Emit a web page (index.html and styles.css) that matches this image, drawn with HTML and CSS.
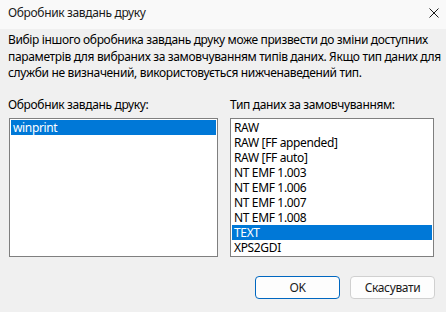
FILE: index.html
```html
<!DOCTYPE html>
<html lang="uk">
<head>
<meta charset="utf-8">
<title>Обробник завдань друку</title>
<link rel="stylesheet" href="styles.css">
</head>
<body>
<div class="window">
  <div class="titlebar">
    <span class="title">Обробник завдань друку</span>
    <svg class="close" width="10" height="10" viewBox="0 0 10 10"><path d="M0.5 0.5 L9.5 9.5 M9.5 0.5 L0.5 9.5" stroke="#1a1a1a" stroke-width="1" fill="none"/></svg>
  </div>
  <div class="content">
    <p class="intro">Вибір іншого обробника завдань друку може призвести до зміни доступних<br>параметрів для вибраних за замовчуванням типів даних. Якщо тип даних для<br>служби не визначений, використовується нижченаведений тип.</p>
    <div class="columns">
      <div class="col col-left">
        <div class="label">Обробник завдань друку:</div>
        <ul class="listbox list-left">
          <li class="sel">winprint</li>
        </ul>
      </div>
      <div class="col col-right">
        <div class="label">Тип даних за замовчуванням:</div>
        <ul class="listbox list-right">
          <li>RAW</li>
          <li>RAW [FF appended]</li>
          <li>RAW [FF auto]</li>
          <li>NT EMF 1.003</li>
          <li>NT EMF 1.006</li>
          <li>NT EMF 1.007</li>
          <li>NT EMF 1.008</li>
          <li class="sel">TEXT</li>
          <li>XPS2GDI</li>
        </ul>
      </div>
    </div>
    <div class="buttons">
      <button class="btn btn-default">OK</button>
      <button class="btn">Скасувати</button>
    </div>
  </div>
</div>
</body>
</html>
```
FILE: styles.css
```css
html, body {
  margin: 0;
  padding: 0;
}
body {
  width: 446px;
  height: 312px;
  background: #f0f0f0;
  font-family: "Noto Sans", "Open Sans", sans-serif;
  font-size: 12px;
  letter-spacing: -0.35px;
  color: #000;
  overflow: hidden;
}
.window {
  display: flex;
  flex-direction: column;
  height: 312px;
}
.titlebar {
  height: 29px;
  background: #f9f9f9;
  display: flex;
  align-items: center;
  justify-content: space-between;
  padding: 0 7px 0 8px;
  flex: none;
}
.title {
  line-height: 16px;
  margin-top: -4px;
  color: #1a1a1a;
}
.close {
  display: block;
  margin-top: -4px;
}
.content {
  padding: 0 11px 0 8px;
}
.intro {
  margin: 3px 0 0 0;
  line-height: 16.5px;
  white-space: nowrap;
}
.columns {
  display: grid;
  grid-template-columns: 210px 204px;
  column-gap: 12px;
  margin-top: 15.5px;
}
.label {
  line-height: 16.5px;
  height: 16.5px;
  margin-bottom: 4.5px;
  white-space: nowrap;
}
.listbox {
  list-style: none;
  margin: 0;
  padding: 1px;
  border: 1px solid #7f7f7f;
  background: #fff;
  height: 135px;
}
.list-left {
  margin-left: 1px;
}
.listbox li {
  height: 15px;
  line-height: 15px;
  padding-left: 2px;
  white-space: nowrap;
}
.listbox li.sel {
  background: #0078d7;
  color: #fff;
}
.buttons {
  display: flex;
  justify-content: flex-end;
  gap: 10px;
  margin-top: 19px;
}
.btn {
  width: 85px;
  height: 23px;
  font-family: inherit;
  font-size: 12px;
  letter-spacing: -0.35px;
  color: #1a1a1a;
  background: #fdfdfd;
  border: 1px solid #d0d0d0;
  border-radius: 4px;
  padding: 0;
}
.btn-default {
  border-color: #0067c0;
}
```
